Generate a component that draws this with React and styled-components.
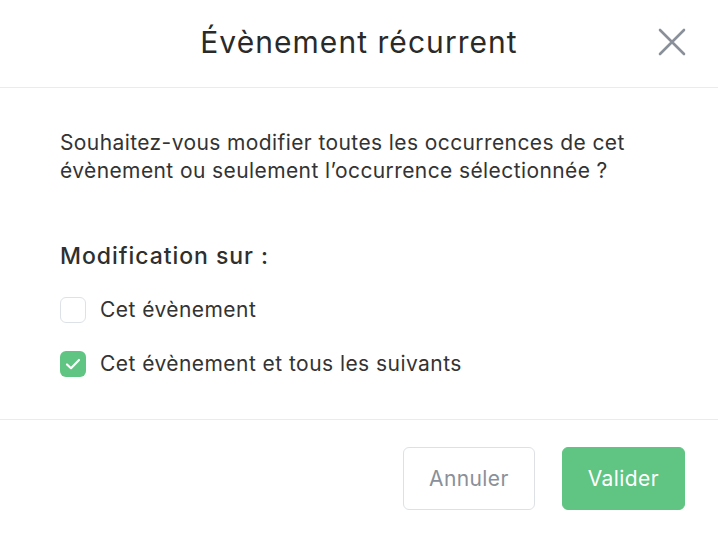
import React, { useState } from "react";
import styled, { createGlobalStyle } from "styled-components";

const Global = createGlobalStyle`
  html, body { margin: 0; padding: 0; background: #ffffff; }
  body { font-family: Inter, "Noto Sans", "Liberation Sans", sans-serif; -webkit-font-smoothing: antialiased; }
  * { box-sizing: border-box; }
`;

const Modal = styled.div`
  width: 718px;
  height: 535px;
  background: #fff;
  display: flex;
  flex-direction: column;
  color: #2f2f2f;
`;

const Header = styled.header`
  height: 88px;
  border-bottom: 1px solid #e9ebef;
  display: grid;
  grid-template-columns: 1fr auto 1fr;
  align-items: center;
  padding: 0 32px 4px 32px;
`;

const Title = styled.h1`
  grid-column: 2;
  margin: 0;
  font-size: 30px;
  font-weight: 400;
  letter-spacing: 1.05px;
  color: #2a2a2a;
`;

const Close = styled.button`
  grid-column: 3;
  justify-self: end;
  width: 28px;
  height: 28px;
  padding: 0;
  border: none;
  background: none;
  display: flex;
  cursor: pointer;
`;

const Body = styled.section`
  padding: 41px 60px 42px;
  display: flex;
  flex-direction: column;
`;

const Question = styled.p`
  margin: 0;
  font-size: 21px;
  line-height: 28px;
  letter-spacing: 0.4px;
  color: #333;
`;

const SubTitle = styled.h2`
  margin: 57px 0 27px;
  font-size: 23px;
  line-height: 28px;
  font-weight: 500;
  letter-spacing: 0.95px;
  color: #2f2f2f;
`;

const Options = styled.div`
  display: flex;
  flex-direction: column;
  gap: 28px;
`;

const Option = styled.label`
  display: flex;
  align-items: center;
  gap: 14px;
  font-size: 21px;
  line-height: 26px;
  letter-spacing: 0.45px;
  color: #333;
  cursor: pointer;
`;

const Box = styled.span`
  width: 26px;
  height: 26px;
  border-radius: 6px;
  display: flex;
  align-items: center;
  justify-content: center;
  background: ${(p) => (p.$checked ? "#60c482" : "#fff")};
  border: ${(p) => (p.$checked ? "none" : "1.5px solid #dde1e8")};
`;

const Footer = styled.footer`
  border-top: 1px solid #e9ebef;
  display: flex;
  justify-content: flex-end;
  gap: 27px;
  padding: 27px 33px 0;
`;

const Button = styled.button`
  height: 63px;
  padding: 0 25px;
  border-radius: 6px;
  font-family: inherit;
  font-size: 21px;
  letter-spacing: 0.4px;
  cursor: pointer;
  border: 1.5px solid ${(p) => (p.$primary ? "#60c482" : "#dde1e6")};
  background: ${(p) => (p.$primary ? "#60c482" : "#fff")};
  color: ${(p) => (p.$primary ? "#fff" : "#8a9099")};
`;

const options = ["Cet évènement", "Cet évènement et tous les suivants"];

export default function App() {
  const [sel, setSel] = useState(1);
  return (
    <>
      <Global />
      <Modal>
        <Header>
          <Title>Évènement récurrent</Title>
          <Close aria-label="Fermer">
            <svg width="28" height="28" viewBox="0 0 28 28" fill="none">
              <path d="M2 2L26 26M26 2L2 26" stroke="#8a9099" strokeWidth="2.6" strokeLinecap="round" />
            </svg>
          </Close>
        </Header>
        <Body>
          <Question>
            Souhaitez-vous modifier toutes les occurrences de cet
            <br />
            évènement ou seulement l’occurrence sélectionnée ?
          </Question>
          <SubTitle>Modification sur :</SubTitle>
          <Options>
            {options.map((o, i) => (
              <Option key={o} onClick={() => setSel(i)}>
                <Box $checked={sel === i}>
                  {sel === i && (
                    <svg width="18" height="18" viewBox="0 0 18 18" fill="none">
                      <path d="M3 9.5L7 13.2L15 5" stroke="#fff" strokeWidth="2.2" strokeLinecap="round" strokeLinejoin="round" />
                    </svg>
                  )}
                </Box>
                {o}
              </Option>
            ))}
          </Options>
        </Body>
        <Footer>
          <Button>Annuler</Button>
          <Button $primary>Valider</Button>
        </Footer>
      </Modal>
    </>
  );
}
